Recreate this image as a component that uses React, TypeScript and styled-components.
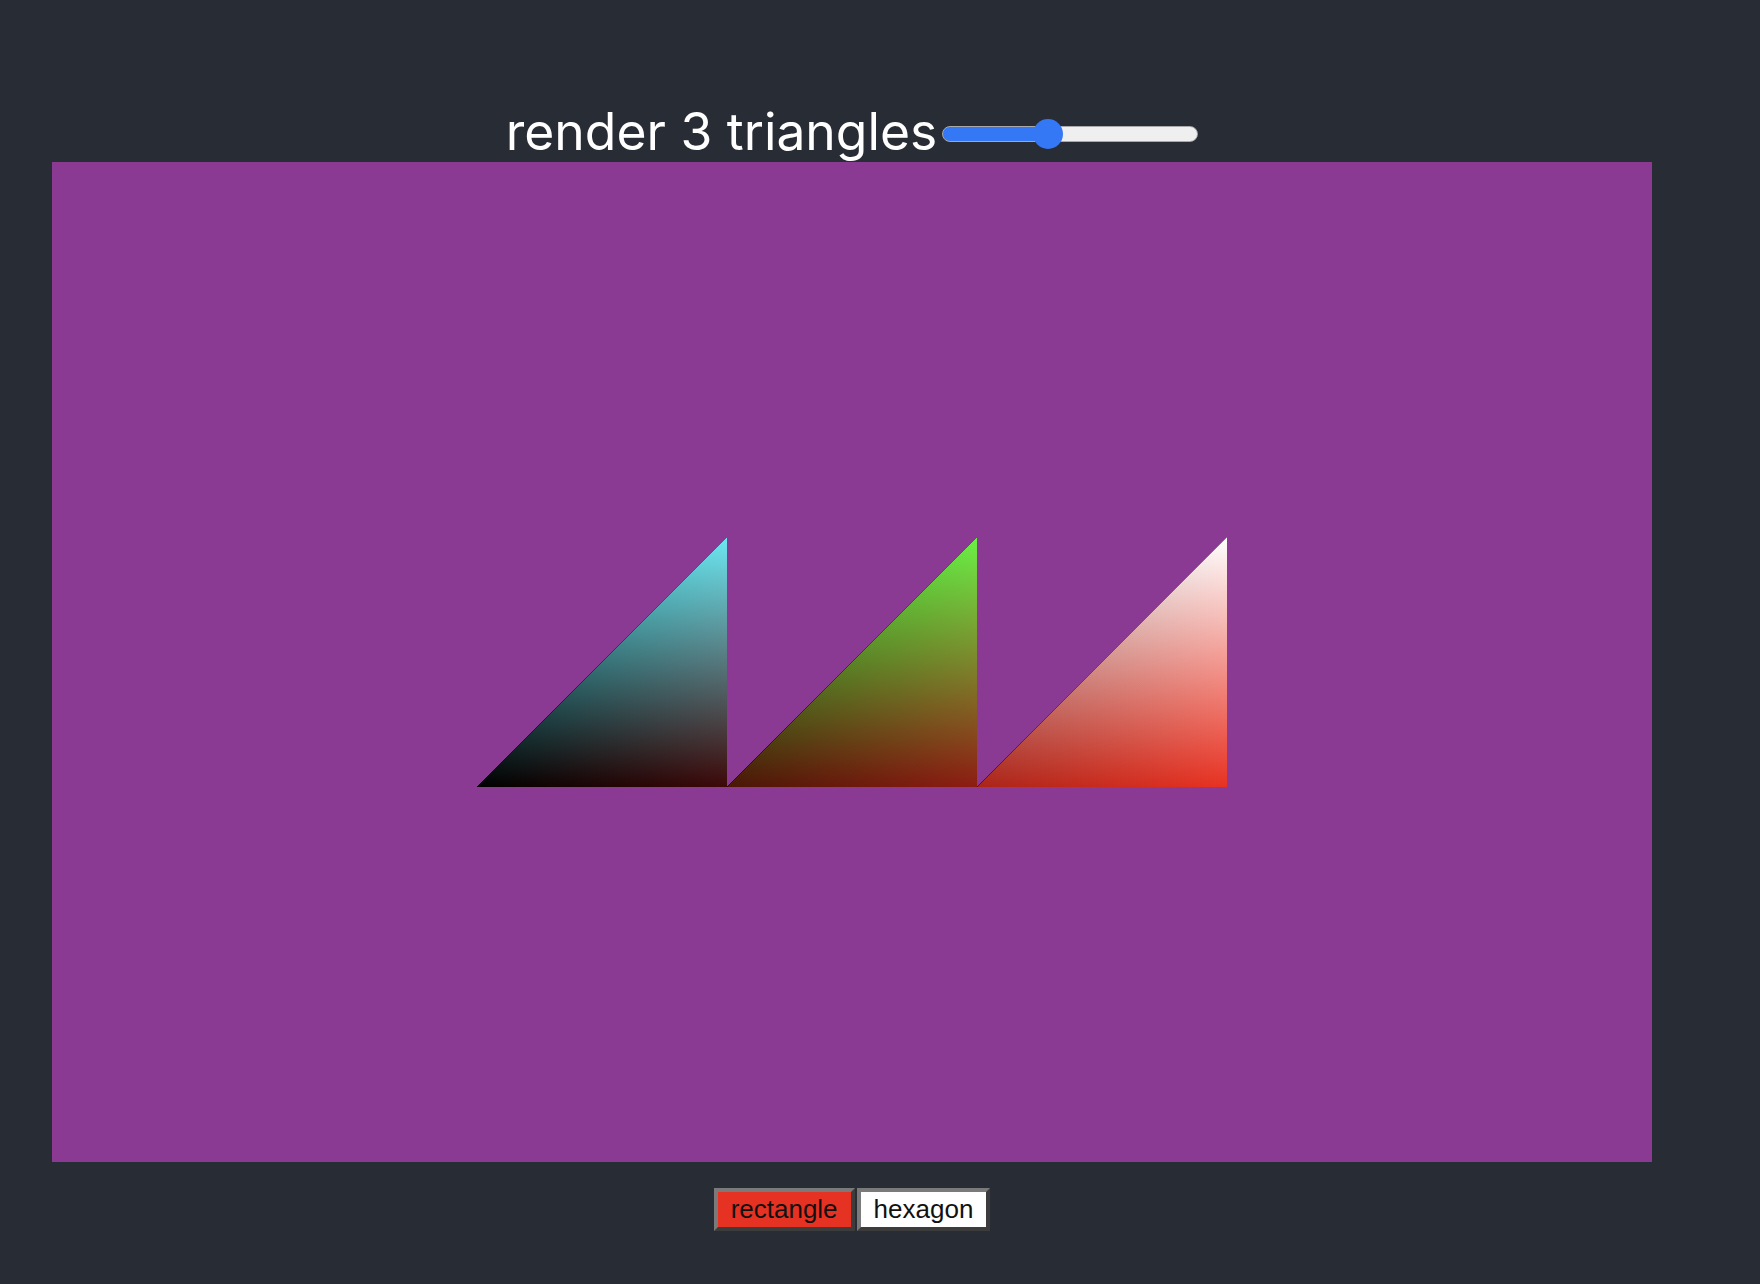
import React, { useState } from "react";
import styled, { createGlobalStyle } from "styled-components";

const GlobalStyle = createGlobalStyle`
  html, body {
    margin: 0;
    padding: 0;
    background: #282c34;
  }
  body {
    font-family: "Liberation Sans", Arial, sans-serif;
  }
`;

const Page = styled.div`
  min-height: 1284px;
  box-sizing: border-box;
  padding: 99px 0 0 52px;
  display: flex;
  flex-direction: column;
  width: 1652px;
`;

const Header = styled.div`
  display: flex;
  justify-content: center;
  align-items: flex-start;
  height: 63px;
  gap: 5px;
`;

const Title = styled.span`
  font-family: Inter, "Noto Sans", sans-serif;
  font-size: 51.6px;
  line-height: 64px;
  color: #ffffff;
  white-space: nowrap;
`;

const Slider = styled.input<{ $fill: number }>`
  -webkit-appearance: none;
  appearance: none;
  width: 256px;
  height: 30px;
  margin: 20px 0 0 0;
  padding: 0;
  background: transparent;
  outline: none;

  &::-webkit-slider-runnable-track {
    box-sizing: border-box;
    height: 16px;
    border-radius: 8px;
    border: 1px solid #a9a9a9;
    background: linear-gradient(
      to right,
      #3478f6 0%,
      #3478f6 ${(p) => p.$fill}%,
      #efefef ${(p) => p.$fill}%,
      #efefef 100%
    );
  }

  &::-webkit-slider-thumb {
    -webkit-appearance: none;
    appearance: none;
    width: 30px;
    height: 30px;
    border-radius: 50%;
    border: none;
    background: #3478f6;
    margin-top: -8px;
  }
`;

const Canvas = styled.div`
  width: 1600px;
  height: 1000px;
  background: #8b3a93;
  flex: none;

  svg {
    display: block;
  }
`;

const ButtonRow = styled.div`
  display: flex;
  justify-content: center;
  gap: 2px;
  margin-top: 26px;
`;

const ShapeButton = styled.button<{ $active: boolean }>`
  font-family: "Liberation Sans", Arial, sans-serif;
  font-size: 26px;
  line-height: 30px;
  height: 43px;
  padding: 2px 13px 3px;
  margin: 0;
  color: #111111;
  background: ${(p) => (p.$active ? "#e53223" : "#ffffff")};
  border-style: solid;
  border-width: 4px;
  border-color: #7a7a7a #3c3c3c #3c3c3c #7a7a7a;
  cursor: pointer;
`;

type Tri = { top: string; bl: string; br: string };

const PALETTE: Tri[] = [
  { top: "#6ee8f2", bl: "#000000", br: "#3e0808" },
  { top: "#6cf046", bl: "#4a1606", br: "#8e1c12" },
  { top: "#ffffff", bl: "#aa2418", br: "#e83222" },
  { top: "#f0e86e", bl: "#2a0a40", br: "#6e1c60" },
  { top: "#ee6ef0", bl: "#10204a", br: "#3a58a0" },
  { top: "#9af0c8", bl: "#303010", br: "#a0a030" },
];

const W = 250;

function Triangles({ count }: { count: number }) {
  const total = count * W;
  const startX = 800 - total / 2;
  const y0 = 375;
  const y1 = 625;
  return (
    <svg width={1600} height={1000} viewBox="0 0 1600 1000">
      <defs>
        {Array.from({ length: count }).map((_, i) => {
          const c = PALETTE[i % PALETTE.length];
          const x0 = startX + i * W;
          const x1 = x0 + W;
          return (
            <React.Fragment key={i}>
              <linearGradient id={`gt${i}`} gradientUnits="userSpaceOnUse" x1={x1} y1={y1} x2={x1} y2={y0}>
                <stop offset="0" stopColor="#000000" />
                <stop offset="1" stopColor={c.top} />
              </linearGradient>
              <linearGradient id={`gl${i}`} gradientUnits="userSpaceOnUse" x1={x1} y1={y1} x2={x0} y2={y1}>
                <stop offset="0" stopColor="#000000" />
                <stop offset="1" stopColor={c.bl} />
              </linearGradient>
              <linearGradient
                id={`gr${i}`}
                gradientUnits="userSpaceOnUse"
                x1={(x0 + x1) / 2}
                y1={(y0 + y1) / 2}
                x2={x1}
                y2={y1}
              >
                <stop offset="0" stopColor="#000000" />
                <stop offset="1" stopColor={c.br} />
              </linearGradient>
            </React.Fragment>
          );
        })}
      </defs>
      {Array.from({ length: count }).map((_, i) => {
        const x0 = startX + i * W;
        const x1 = x0 + W;
        const pts = `${x0},${y1} ${x1},${y0} ${x1},${y1}`;
        return (
          <g key={i} style={{ isolation: "isolate" }}>
            <polygon points={pts} fill={`url(#gt${i})`} />
            <polygon points={pts} fill={`url(#gl${i})`} style={{ mixBlendMode: "plus-lighter" as any }} />
            <polygon points={pts} fill={`url(#gr${i})`} style={{ mixBlendMode: "plus-lighter" as any }} />
          </g>
        );
      })}
    </svg>
  );
}

export default function App() {
  const [count, setCount] = useState(3);
  const [shape, setShape] = useState<"rectangle" | "hexagon">("rectangle");
  const min = 1;
  const max = 6;
  const frac = (count - min) / (max - min);
  const fill = ((15 + frac * (256 - 30)) / 256) * 100;

  return (
    <>
      <GlobalStyle />
      <Page>
        <Header>
          <Title>render {count} triangles</Title>
          <Slider
            type="range"
            min={min}
            max={max}
            value={count}
            $fill={fill}
            onChange={(e) => setCount(Number(e.target.value))}
          />
        </Header>
        <Canvas>
          <Triangles count={count} />
        </Canvas>
        <ButtonRow>
          <ShapeButton $active={shape === "rectangle"} onClick={() => setShape("rectangle")}>
            rectangle
          </ShapeButton>
          <ShapeButton $active={shape === "hexagon"} onClick={() => setShape("hexagon")}>
            hexagon
          </ShapeButton>
        </ButtonRow>
      </Page>
    </>
  );
}
